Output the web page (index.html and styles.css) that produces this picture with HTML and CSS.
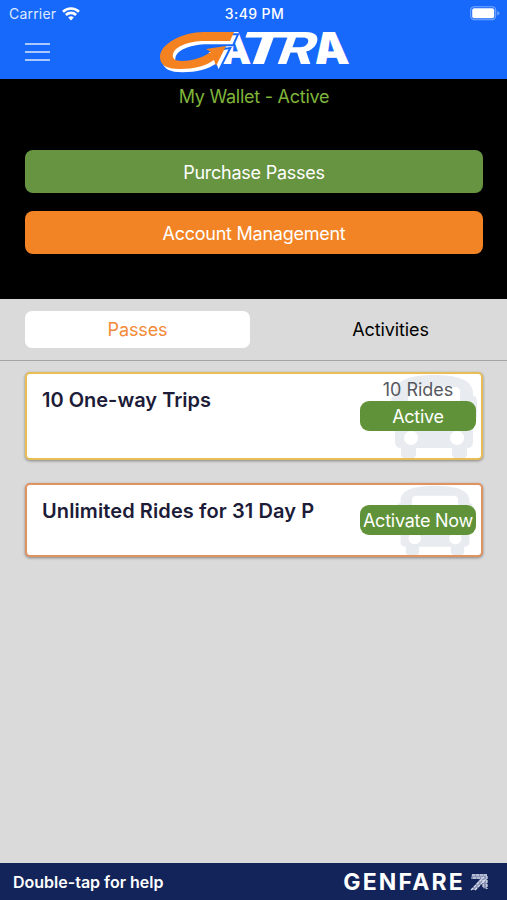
FILE: index.html
```
<!DOCTYPE html>
<html lang="en">
  <head>
    <title>My Wallet</title>
    <meta charset="UTF-8" />
    <meta name="viewport" content="width=device-width" />
    <link rel="stylesheet" href="styles.css">
  </head>
  <body>
    <header class="header">
      <div class="status">
        <div class="status__carrier">
          <span>Carrier</span>
          <svg class="status__wifi" viewBox="0 0 18 14">
            <path d="M1 4.800a11.500 11.500 0 0 1 16 0M3.900 8a7.300 7.300 0 0 1 10.200 0" fill="none" stroke="#fff" stroke-width="2.600"/>
            <path d="M9 13.5l-2.8-3a4 4 0 0 1 5.6 0z" fill="#fff"/>
          </svg>
        </div>
        <span class="status__time">3:49 PM</span>
        <svg class="status__battery" viewBox="0 0 30 15">
          <rect x=".7" y=".7" width="25" height="13" rx="3.6" fill="none" stroke="#79a9ff" stroke-width="1.1"/>
          <rect x="2.2" y="2.2" width="22" height="10" rx="2" fill="#fff"/>
          <path d="M27.3 5v4.6q2-.8 2-2.3T27.3 5z" fill="#79a9ff"/>
        </svg>
      </div>
      <div class="nav">
        <button class="menu" aria-label="Menu"><span></span><span></span><span></span></button>
        <svg class="logo" viewBox="0 0 190 44">
          <g class="logo__text">
            <text transform="translate(62 34) skewX(6) scale(.84 1)">A</text>
            <text transform="translate(73 34) skewX(-20) scale(1.72 1)" class="logo__thin">T</text>
            <text transform="translate(114 34) skewX(-20) scale(1.3 1)" class="logo__thin">R</text>
            <text transform="translate(155 34) skewX(6)">A</text>
          </g>
          <path d="M74 2H44C22 2 0 14 0 27c0 9 8 12 20 12 14 0 26-3 34-9l2 6L66 16 46 19l5 3c-9 6-20 9-29 9-8 0-10-3-9-7 2-8 17-13 31-13h26z" fill="#fff" stroke="#1769fc" stroke-width="4" paint-order="stroke" transform="translate(2.500 3.300)"/>
          <path d="M74 2H44C22 2 0 14 0 27c0 9 8 12 20 12 14 0 26-3 34-9l2 6L66 16 46 19l5 3c-9 6-20 9-29 9-8 0-10-3-9-7 2-8 17-13 31-13h26z" fill="#f58220"/>
        </svg>
      </div>
    </header>

    <section class="wallet">
      <p class="wallet__status">My Wallet - Active</p>
      <button class="button button--green">Purchase Passes</button>
      <button class="button button--orange">Account Management</button>
    </section>

    <nav class="tabs">
      <button class="tab tab--active">Passes</button>
      <button class="tab">Activities</button>
    </nav>

    <main class="passes">
      <article class="pass pass--yellow">
        <svg class="pass__bus" viewBox="0 0 86 84" preserveAspectRatio="none">
          <path fill-rule="evenodd" d="M4 19C4 5 22 1 43 1s39 4 39 18v3q4 0 4 5v14q0 5-4 5v22q0 6-6 6v6q0 4-4 4h-7q-4 0-4-4v-6H25v6q0 4-4 4h-7q-4 0-4-4v-6q-6 0-6-6V46q-4 0-4-5V27q0-5 4-5zM22 13q-5 0-5 5v27q0 5 5 5h42q5 0 5-5V18q0-5-5-5zM20 57a7 7 0 1 0 .1 0zM66 57a7 7 0 1 0 .1 0z"/>
        </svg>
        <h2 class="pass__title">10 One-way Trips</h2>
        <div class="pass__side">
          <span class="pass__rides">10 Rides</span>
          <button class="pass__button">Active</button>
        </div>
      </article>
      <article class="pass pass--orange">
        <svg class="pass__bus" viewBox="0 0 86 84" preserveAspectRatio="none">
          <path fill-rule="evenodd" d="M4 19C4 5 22 1 43 1s39 4 39 18v3q4 0 4 5v14q0 5-4 5v22q0 6-6 6v6q0 4-4 4h-7q-4 0-4-4v-6H25v6q0 4-4 4h-7q-4 0-4-4v-6q-6 0-6-6V46q-4 0-4-5V27q0-5 4-5zM22 13q-5 0-5 5v27q0 5 5 5h42q5 0 5-5V18q0-5-5-5zM20 57a7 7 0 1 0 .1 0zM66 57a7 7 0 1 0 .1 0z"/>
        </svg>
        <h2 class="pass__title">Unlimited Rides for 31 Day P</h2>
        <div class="pass__side">
          <button class="pass__button">Activate Now</button>
        </div>
      </article>
    </main>

    <footer class="footer">
      <span class="footer__help">Double-tap for help</span>
      <div class="brand">
        <span class="brand__name">GENFARE</span>
        <svg class="brand__icon" viewBox="0 0 18 18">
          <path d="M2 1h15v15l-4-1V9l-7 8H1l9-11H1z" fill="#8893b5"/>
          <path d="M2 2h15v14M3 5h10M13 7v8M1 17L14 4M5 17L16 6" fill="none" stroke="#dfe4f0" stroke-width="1.2" stroke-dasharray="3 1"/>
        </svg>
      </div>
    </footer>
  </body>
</html>
```
FILE: styles.css
```
* {
  box-sizing: border-box;
}

body {
  margin: 0;
  height: 900px;
  display: flex;
  flex-direction: column;
  background: #dadada;
  font-family: Inter, "Liberation Sans", sans-serif;
  font-size: 18px;
  letter-spacing: -0.25px;
  overflow: hidden;
}

button {
  border: none;
  padding: 0;
  font: inherit;
  letter-spacing: inherit;
  color: #fff;
}

.header {
  height: 79px;
  background: #1769fc;
  color: #fff;
}

.status {
  height: 27px;
  padding: 0 7px 0 9px;
  display: grid;
  grid-template-columns: 1fr auto 1fr;
  align-items: center;
  font-size: 14px;
}

.status__carrier {
  display: flex;
  align-items: center;
  gap: 6px;
  color: #dce9ff;
  letter-spacing: 0.2px;
}

.status__wifi {
  width: 18px;
  height: 14px;
}

.status__time {
  font-weight: 500;
  font-size: 14px;
  letter-spacing: 0.4px;
}

.status__battery {
  width: 30px;
  height: 15px;
  justify-self: end;
}

.nav {
  display: flex;
  padding-left: 25px;
}

.menu {
  width: 25px;
  height: 18px;
  margin: 16px 110px 0 0;
  display: flex;
  flex-direction: column;
  justify-content: space-between;
  background: none;
}

.menu span {
  height: 2px;
  width: 25px;
  background: #a9c9ff;
}

.logo {
  width: 190px;
  height: 44px;
  margin-top: 3px;
  overflow: visible;
}

.logo__text {
  fill: #fff;
  font-size: 44px;
  font-weight: 900;
  letter-spacing: 0;
}

.logo__thin {
  font-weight: 700;
}

.wallet {
  height: 220px;
  padding: 7px 24px 0 25px;
  background: #000;
}

.wallet__status {
  margin: 0 0 42px;
  line-height: 22px;
  text-align: center;
  color: #7fb539;
}

.button {
  display: block;
  width: 100%;
  height: 43px;
  margin-bottom: 18px;
  padding-top: 1px;
  border-radius: 8px;
}

.button--green {
  background: #679441;
}

.button--orange {
  background: #f28425;
}

.tabs {
  display: flex;
  height: 62px;
  padding: 12px 4px 12px 25px;
  border-bottom: 1px solid #a5a5a5;
}

.tab {
  width: 225px;
  height: 37px;
  border-radius: 7px;
  background: none;
  color: #000;
  letter-spacing: -0.1px;
}

.tab + .tab {
  margin-left: 28px;
}

.tab--active {
  background: #fff;
  color: #f28a38;
}

.passes {
  flex: 1;
  padding: 11px 24px 11px 25px;
}

.pass {
  position: relative;
  display: flex;
  justify-content: space-between;
  padding: 14px 5px 0 15px;
  background: #fff;
  border: 2px solid;
  border-radius: 5px;
  box-shadow: 0 1px 3px rgba(0, 0, 0, 0.4);
}

.pass--yellow {
  height: 88px;
  margin-bottom: 23px;
  border-color: #e6be55;
}

.pass--orange {
  height: 74px;
  border-color: #e0925f;
}

.pass__bus {
  position: absolute;
  top: 0;
  right: 4px;
  width: 86px;
  height: 84px;
  fill: #e8ebf0;
}

.pass--orange .pass__bus {
  right: 8px;
  width: 76px;
  height: 70px;
}

.pass__title {
  margin: 0;
  font-size: 20px;
  font-weight: 600;
  line-height: 24px;
  letter-spacing: 0;
  color: #1c1b38;
}

.pass--orange .pass__title {
  letter-spacing: 0.1px;
}

.pass__side {
  position: relative;
  width: 116px;
  margin-top: -9px;
  text-align: center;
}

.pass--orange .pass__side {
  margin-top: 6px;
}

.pass__rides {
  display: block;
  line-height: 22px;
  letter-spacing: 0;
  color: #56585f;
}

.pass__button {
  display: block;
  width: 116px;
  height: 30px;
  border-radius: 9px;
  background: #609339;
  white-space: nowrap;
}

.footer {
  display: flex;
  justify-content: space-between;
  align-items: center;
  height: 37px;
  padding: 0 19px 0 13px;
  background: #12245a;
  color: #fff;
}

.footer__help {
  font-size: 16px;
  font-weight: 600;
  letter-spacing: 0;
}

.brand {
  display: flex;
  align-items: center;
  gap: 5px;
}

.brand__name {
  font-size: 23px;
  font-weight: 700;
  letter-spacing: 2.2px;
}

.brand__icon {
  width: 18px;
  height: 18px;
}
```
